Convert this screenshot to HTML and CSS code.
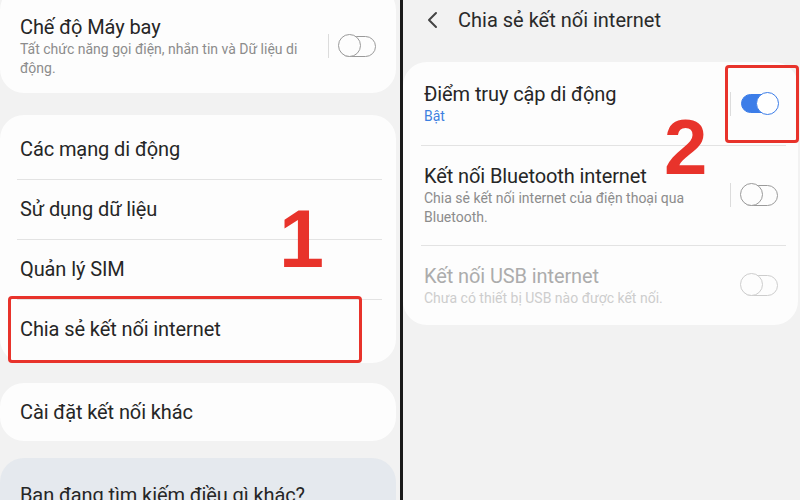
FILE: index.html
```html
<!DOCTYPE html>
<html lang="vi">
<head>
<meta charset="utf-8">
<title>Chia sẻ kết nối internet</title>
<link rel="stylesheet" href="styles.css">
</head>
<body>
<div class="screen">
  <section class="panel panel-left">
    <div class="card card-first">
      <div class="row row-toggle">
        <div class="row-text">
          <div class="title">Chế độ Máy bay</div>
          <div class="sub">Tất chức năng gọi điện, nhắn tin và Dữ liệu di động.</div>
        </div>
        <span class="vline"></span>
        <span class="toggle"><span class="knob"></span></span>
      </div>
    </div>

    <div class="card card-list">
      <div class="row row-simple"><div class="title">Các mạng di động</div></div>
      <div class="row row-simple"><div class="title">Sử dụng dữ liệu</div></div>
      <div class="row row-simple"><div class="title">Quản lý SIM</div></div>
      <div class="row row-simple"><div class="title">Chia sẻ kết nối internet</div></div>
    </div>

    <div class="card card-single">
      <div class="row row-simple"><div class="title">Cài đặt kết nối khác</div></div>
    </div>

    <div class="card card-hint">
      <div class="title">Bạn đang tìm kiếm điều gì khác?</div>
    </div>

    <div class="mark mark-1"></div>
    <div class="step step-1">1</div>
  </section>

  <div class="split"></div>

  <section class="panel panel-right">
    <header class="topbar">
      <svg class="back" width="12" height="18" viewBox="0 0 12 18"><polyline points="9,2 2,9 9,16" fill="none" stroke="#444" stroke-width="2" stroke-linecap="round" stroke-linejoin="round"/></svg>
      <span class="topbar-title">Chia sẻ kết nối internet</span>
    </header>

    <div class="card card-right">
      <div class="row row-toggle row-r1">
        <div class="row-text">
          <div class="title">Điểm truy cập di động</div>
          <div class="sub sub-on">Bật</div>
        </div>
        <span class="vline"></span>
        <span class="toggle toggle-on"><span class="knob"></span></span>
      </div>
      <div class="row row-toggle row-r2">
        <div class="row-text">
          <div class="title">Kết nối Bluetooth internet</div>
          <div class="sub">Chia sẻ kết nối internet của điện thoại qua Bluetooth.</div>
        </div>
        <span class="vline"></span>
        <span class="toggle"><span class="knob"></span></span>
      </div>
      <div class="row row-toggle row-r3 disabled">
        <div class="row-text">
          <div class="title">Kết nối USB internet</div>
          <div class="sub">Chưa có thiết bị USB nào được kết nối.</div>
        </div>
        <span class="vline vline-hidden"></span>
        <span class="toggle"><span class="knob"></span></span>
      </div>
    </div>

    <div class="mark mark-2"></div>
    <div class="step step-2">2</div>
  </section>
</div>
</body>
</html>
```

FILE: styles.css
```css
* { box-sizing: border-box; }

html, body {
  margin: 0;
  padding: 0;
  width: 800px;
  height: 500px;
  overflow: hidden;
  background: #f2f2f2;
  font-family: Roboto, "Noto Sans", "Liberation Sans", sans-serif;
  color: #252525;
}

.screen {
  display: flex;
  width: 800px;
  height: 500px;
}

.panel {
  position: relative;
  background: #f2f2f2;
  height: 500px;
  overflow: hidden;
}

.panel-left {
  width: 400px;
  padding: 0 4px 0 0;
  display: flex;
  flex-direction: column;
}

.split {
  width: 3px;
  background: #1b1b1b;
  box-shadow: 1px 0 0 #777;
}

.panel-right {
  flex: 1;
  display: flex;
  flex-direction: column;
}

.card {
  background: #fdfdfd;
  border-radius: 24px;
  flex: none;
}

.card-first {
  margin-top: -14px;
  padding: 28px 0 15px;
}

.card-list {
  margin-top: 22px;
  padding: 4px 0;
}

.card-single {
  margin-top: 20px;
}

.card-hint {
  margin-top: 17px;
  background: #e5e9ee;
  padding: 24px 20px;
}

.row {
  display: flex;
  align-items: center;
  padding: 0 20px;
}

.title {
  font-size: 20px;
  line-height: 26px;
  color: #262626;
  letter-spacing: -0.1px;
}

.sub {
  font-size: 14px;
  line-height: 19px;
  color: #8c8c8c;
}

.row-simple {
  height: 60px;
  position: relative;
}

.row-simple + .row-simple::before {
  content: "";
  position: absolute;
  top: 0;
  left: 17px;
  right: 14px;
  height: 1px;
  background: #e3e3e3;
}

.card-single .row-simple {
  height: 58px;
}

.row-toggle .row-text {
  flex: 1;
  padding-right: 16px;
}

.vline {
  width: 1px;
  height: 24px;
  background: #dcdcdc;
  margin-right: 10px;
}

.vline-hidden { background: transparent; }

.toggle {
  position: relative;
  width: 37px;
  height: 21px;
  border: 1.5px solid #9a9a9a;
  border-radius: 11px;
  flex: none;
}

.toggle .knob {
  position: absolute;
  left: -2px;
  top: -2.5px;
  width: 23px;
  height: 23px;
  border-radius: 50%;
  border: 1.5px solid #9a9a9a;
  background: #fdfdfd;
}

.toggle-on {
  background: #3c7de8;
  border-color: #3c7de8;
  height: 19px;
}

.toggle-on .knob {
  left: auto;
  right: -2px;
  top: -3px;
  border-color: #3c7de8;
  background: #fff;
}

.topbar {
  height: 40px;
  display: flex;
  align-items: center;
  padding-left: 24px;
  flex: none;
}

.back { margin-right: 19px; }

.topbar-title {
  font-size: 20px;
  color: #2a2a2a;
}

.card-right {
  margin-top: 22px;
  margin-right: 2px;
  padding: 0;
}

.row-r1 {
  height: 83px;
  padding: 0 20px 0 21px;
  position: relative;
}

.row-r2 {
  height: 100px;
  padding: 0 20px 0 21px;
  position: relative;
}

.row-r3 {
  height: 80px;
  padding: 0 20px 0 21px;
  position: relative;
}

.row-r2::before,
.row-r3::before {
  content: "";
  position: absolute;
  top: 0;
  left: 18px;
  right: 12px;
  height: 1px;
  background: #e3e3e3;
}

.sub-on { color: #3d80e0; }

.row-r2 .row-text { padding-right: 14px; }

.disabled .title { color: #acacac; }
.disabled .sub { color: #cdcdcd; }
.disabled .toggle,
.disabled .toggle .knob { border-color: #cdcdcd; }

.mark {
  position: absolute;
  border: 3px solid #e8332b;
  border-radius: 4px;
}

.mark-1 {
  left: 8px;
  top: 296px;
  width: 354px;
  height: 67px;
}

.mark-2 {
  left: 322px;
  top: 65px;
  width: 74px;
  height: 78px;
}

.step {
  position: absolute;
  font-family: "Liberation Sans", Arial, sans-serif;
  font-weight: bold;
  color: #e8332b;
  font-size: 81px;
  line-height: 1;
}

.step-1 {
  left: 279px;
  top: 199px;
}

.step-2 {
  left: 261px;
  top: 108px;
  font-size: 78px;
}
```
